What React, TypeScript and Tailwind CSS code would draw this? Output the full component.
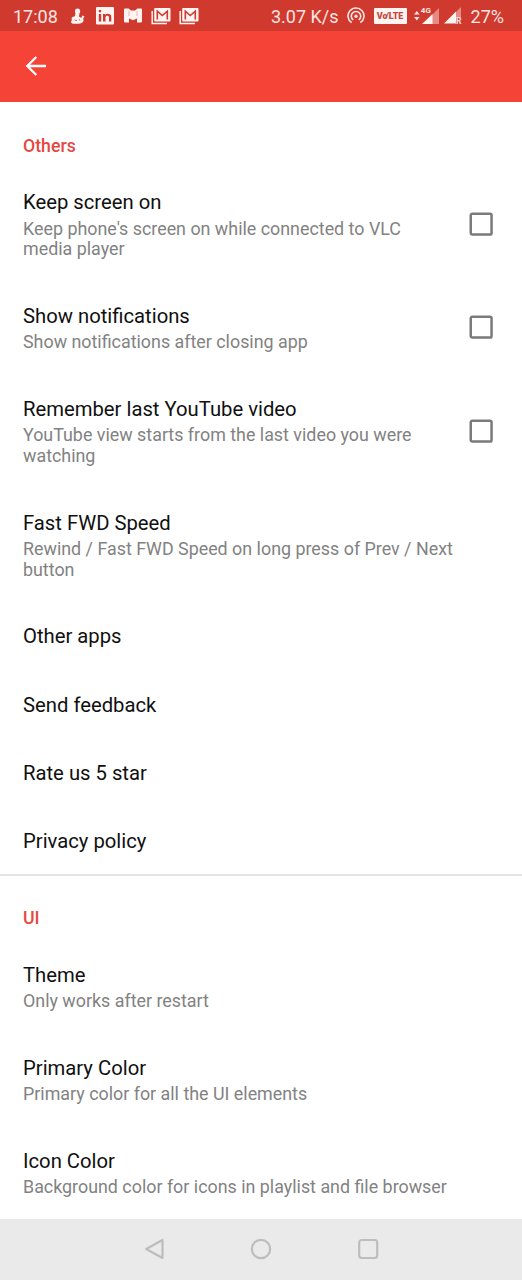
import React from 'react';

type Item = { title: string; lines?: string[]; checkbox?: boolean };

const others: Item[] = [
  { title: 'Keep screen on', lines: ["Keep phone's screen on while connected to VLC", 'media player'], checkbox: true },
  { title: 'Show notifications', lines: ['Show notifications after closing app'], checkbox: true },
  { title: 'Remember last YouTube video', lines: ['YouTube view starts from the last video you were', 'watching'], checkbox: true },
  { title: 'Fast FWD Speed', lines: ['Rewind / Fast FWD Speed on long press of Prev / Next', 'button'] },
  { title: 'Other apps' },
  { title: 'Send feedback' },
  { title: 'Rate us 5 star' },
  { title: 'Privacy policy' },
];

const ui: Item[] = [
  { title: 'Theme', lines: ['Only works after restart'] },
  { title: 'Primary Color', lines: ['Primary color for all the UI elements'] },
  { title: 'Icon Color', lines: ['Background color for icons in playlist and file browser'] },
];

function Row({ title, lines, checkbox }: Item) {
  return (
    <div className="flex shrink-0 items-center justify-between pt-[22.9px] pr-[29px] pb-[21.9px] pl-[23px]">
      <div className="whitespace-nowrap">
        <div className="text-[20.25px] leading-[23.5px] text-[#101010]">{title}</div>
        {lines && (
          <div className="mt-[4.1px] text-[17.88px] leading-[20.7px] text-[#828282]">
            {lines.map((l) => (
              <div key={l}>{l}</div>
            ))}
          </div>
        )}
      </div>
      {checkbox && (
        <svg className="mb-[3px] size-[24px] shrink-0" viewBox="0 0 24 24" fill="none">
          <rect x="1.750" y="1.750" width="20.800" height="20.800" rx="1.600" stroke="#7a7a7a" strokeWidth="2.500" />
        </svg>
      )}
    </div>
  );
}

function Category({ children }: { children: string }) {
  return (
    <div className="h-[66.6px] shrink-0 pt-[34px] pl-[23px] text-[17.7px] leading-[20.7px] font-medium text-[#e5483f]">
      {children}
    </div>
  );
}

function MailStack() {
  return (
    <svg className="h-[18px] w-[20px]" viewBox="0 0 20 18" fill="none">
      <path d="M1.2 4v12.5H16" stroke="#fff4f2" strokeWidth="1.5" />
      <rect x="3.2" y="1" width="16.3" height="13.4" rx="1" fill="#fff4f2" />
      <path d="M6.3 12.5V4.2l5 4.3 5-4.3v8.3" stroke="#cf392e" strokeWidth="1.6" />
    </svg>
  );
}

function StatusBar() {
  return (
    <div className="flex h-[31px] shrink-0 items-center justify-between bg-[#cf392e] pr-[18px] pl-[13px] text-[18px] leading-[31px] text-[#fde5e2]">
      <div className="flex items-center">
        <span className="w-[57px] pt-[2px]">17:08</span>
        <svg className="h-[16px] w-[15px]" viewBox="0 0 15 16" fill="#fff4f2">
          <circle cx="7.6" cy="3" r="2.6" />
          <path d="M5.6 4h4l-.6 4.5 2.200 1.600 1.200-2.600 2 .8-1.300 2.800c1.500 2.400-.9 4.700-4.500 4.700H4.500C.8 15.800.1 13.300 2.200 12 .6 10.300 2.500 8.600 5 8.300z" />
          <path d="M4.500 12l2.500.6M8.800 11.200l1.500 1.300" stroke="#cf392e" strokeWidth=".8" />
        </svg>
        <svg className="ml-[11px] h-[18px] w-[18px]" viewBox="0 0 18 18">
          <rect width="18" height="17.500" rx="1" fill="#fff4f2" />
          <path d="M2.800 7h2.400v7.500H2.800zM2.800 3h2.400v2.300H2.800zM7 7h2.300v1c1.500-2 6-1.500 6 2.200v4.300H13v-4c0-2.300-3.500-2.300-3.500 0v4H7z" fill="#cf392e" />
        </svg>
        <svg className="ml-[10px] h-[15px] w-[18px]" viewBox="0 0 18 15" fill="#fff4f2">
          <path d="M1 .5h3.500L7 2.500h4L13.500.5H17q1 0 1 1v12q0 1-1 1h-4V10.500L9 12.200 5 10.500v4H1q-1 0-1-1v-12q0-1 1-1z" />
          <path d="M5 3v5M13 3v5" stroke="#eb9992" strokeWidth=".7" />
        </svg>
        <span className="ml-[9px]"><MailStack /></span>
        <span className="ml-[8px]"><MailStack /></span>
      </div>
      <div className="flex items-center">
        <span className="pt-[2px]">3.07 K/s</span>
        <svg className="ml-[8px] h-[18px] w-[18px]" viewBox="0 0 18 18" fill="none" stroke="#fde5e2" strokeWidth="1.600">
          <path d="M4.700 15.700a8 8 0 1 1 8.600 0M6.200 12.900a4.700 4.700 0 1 1 5.600 0" />
          <circle cx="9" cy="9.200" r="1.700" fill="#fde5e2" stroke="none" />
        </svg>
        <span className="ml-[9px] flex h-[16px] w-[33px] items-center justify-center rounded-[1px] bg-[#fff4f2] pt-px text-[9px] leading-none font-black text-[#c9473e]">
          Vo<i className="-ml-[2px]">/</i>LTE
        </span>
        <svg className="ml-[7px] h-[20px] w-[25px]" viewBox="0 0 25 20">
          <path d="M0 8.500L2.800 5l2.800 3.500zM0 11l2.800 3.500L5.600 11z" fill="#fde5e2" />
          <path d="M9 18L25 2v16z" fill="#e58b84" />
          <path d="M8 18L18.500 8v10z" fill="#fff4f2" />
          <path d="M6 0h12v7.500H6z" fill="#cf392e" />
          <text x="6.800" y="7.200" fontSize="8" fontWeight="700" fill="#fde5e2" fontFamily="Roboto, sans-serif">4G</text>
        </svg>
        <svg className="ml-[5px] h-[18px] w-[18px]" viewBox="0 0 18 18">
          <path d="M11.500 5.500L17 0v11h-5.500z" fill="#e58b84" />
          <path d="M0 16.500L12 4.500v12z" fill="#fff4f2" />
          <text x="12" y="16.500" fontSize="8.500" fontWeight="700" fill="#fde5e2" fontFamily="Roboto, sans-serif">R</text>
        </svg>
        <span className="ml-[9px] pt-[2px]">27%</span>
      </div>
    </div>
  );
}

export default function App() {
  return (
    <div className="flex h-[1280px] w-[522px] flex-col overflow-hidden bg-white font-['Roboto',sans-serif]">
      <StatusBar />
      <header className="flex h-[70.5px] shrink-0 items-center bg-[#f54337] pl-[25px]">
        <svg className="h-[20px] w-[22px]" viewBox="0 0 22 20" fill="none" stroke="#fff" strokeWidth="2.300">
          <path d="M21 10H2.500M11.300 1L2.300 10l9 9" />
        </svg>
      </header>
      <main className="flex min-h-0 flex-1 flex-col overflow-hidden">
        <Category>Others</Category>
        {others.map((i) => (
          <Row key={i.title} {...i} />
        ))}
        <div className="-mt-[2px] -mb-[1.5px] h-[2px] shrink-0 bg-[#e4e4e4]" />
        <Category>UI</Category>
        {ui.map((i) => (
          <Row key={i.title} {...i} />
        ))}
      </main>
      <nav className="flex h-[61.5px] shrink-0 items-center bg-[#eaeaea] pl-[144px]">
        <svg className="h-[22px] w-[236px]" viewBox="0 0 236 22" fill="none" stroke="#bdbdbd" strokeWidth="2.200" strokeLinejoin="round">
          <path d="M18.500 2v18L2.200 11z" />
          <circle cx="117" cy="11" r="9.200" />
          <rect x="215.200" y="2" width="18" height="18" rx="2.500" />
        </svg>
      </nav>
    </div>
  );
}
